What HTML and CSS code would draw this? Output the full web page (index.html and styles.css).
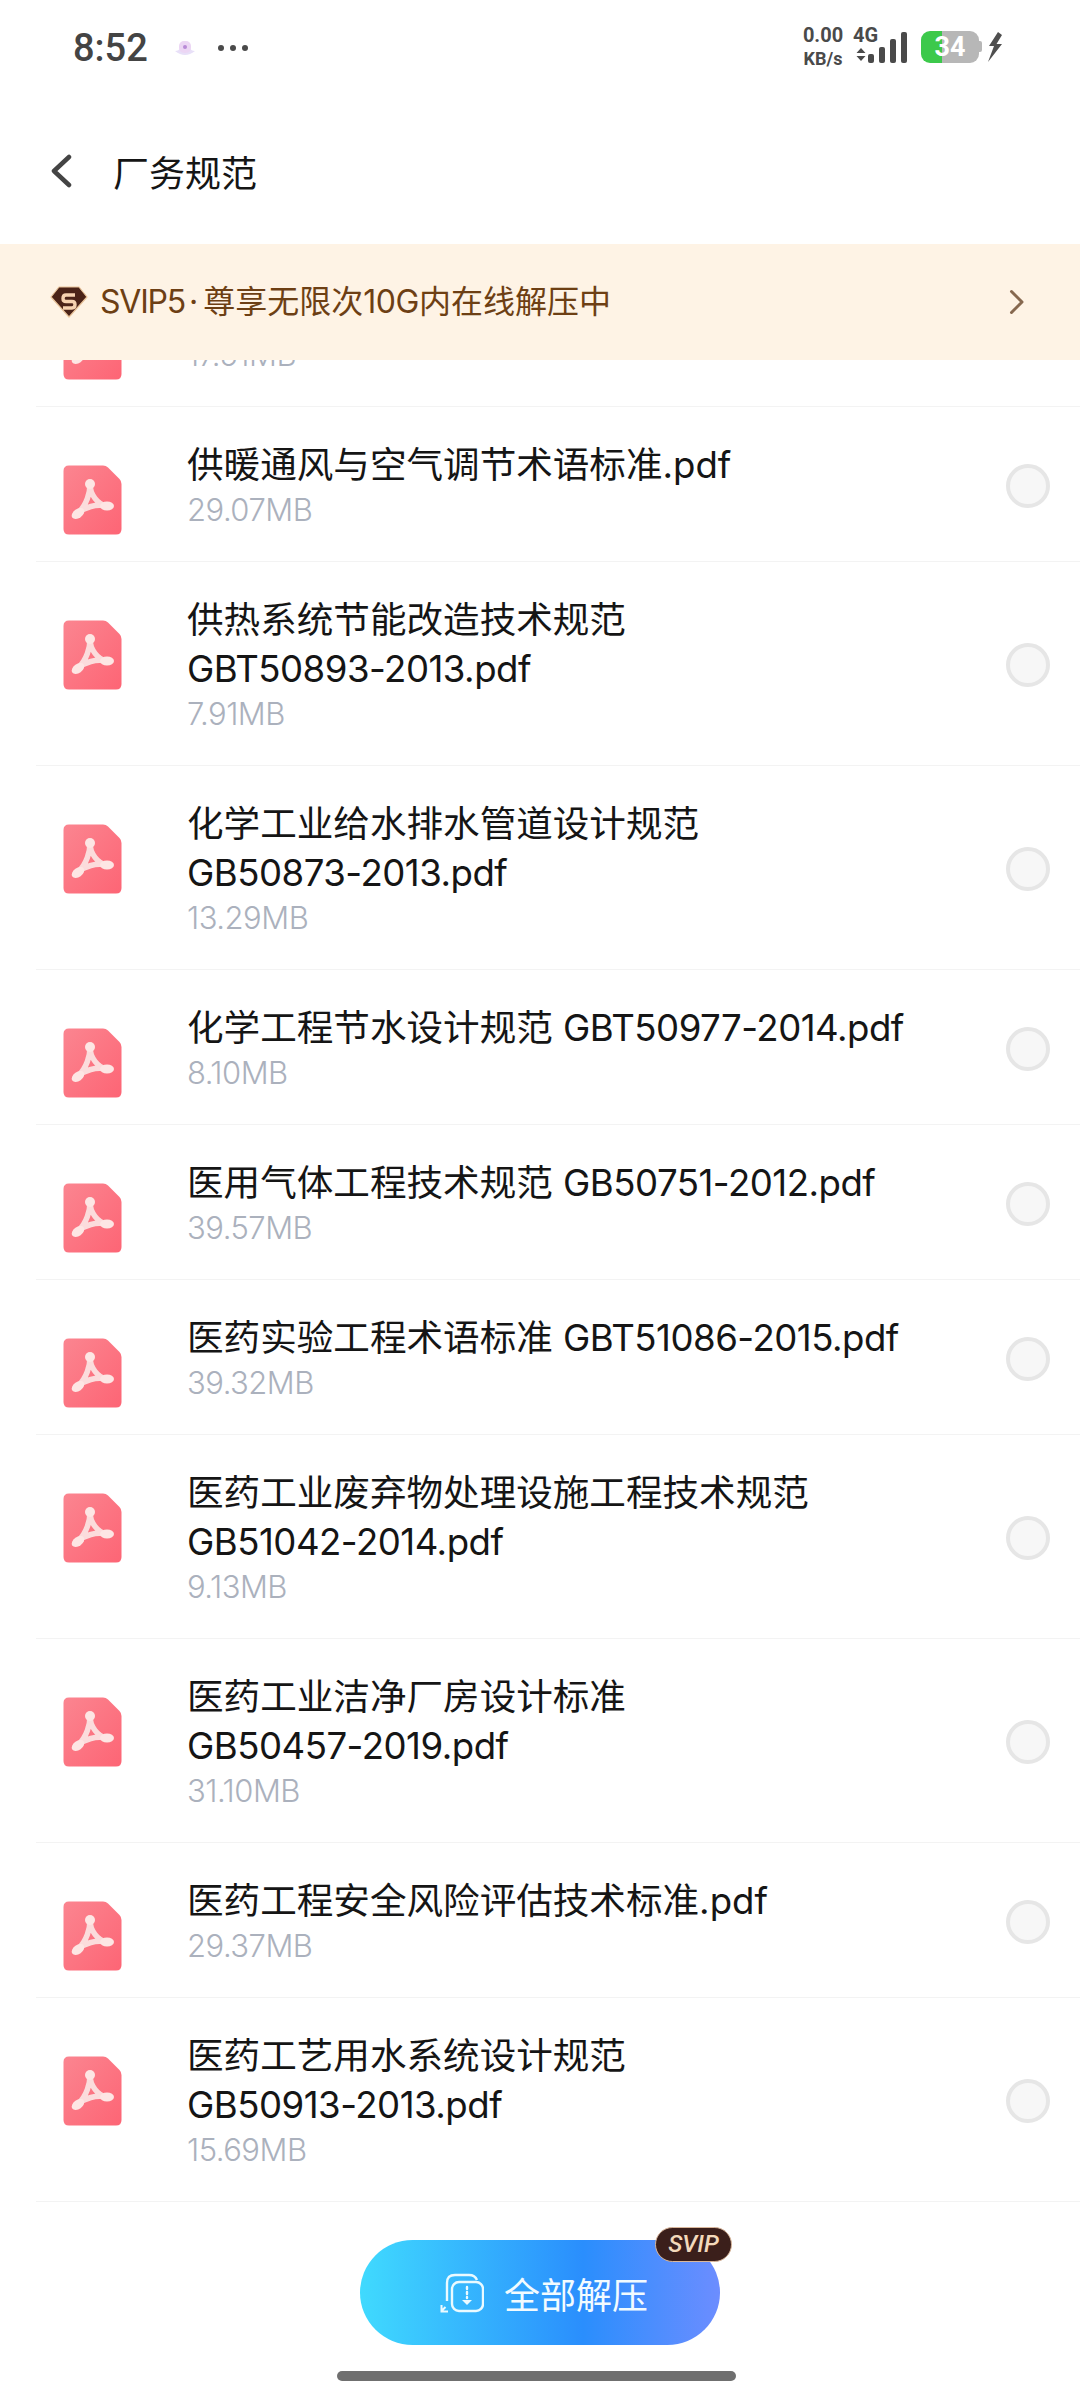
FILE: index.html
```html
<!DOCTYPE html>
<html lang="zh-CN">
<head>
  <meta charset="UTF-8">
  <meta name="viewport" content="width=device-width, initial-scale=1.0">
  <title>厂务规范</title>
  <link rel="stylesheet" href="styles.css">
</head>
<body>
  <svg class="defs" width="0" height="0">
    <defs>
      <linearGradient id="pdf-bg" x1="0" y1="0" x2="1" y2="1">
        <stop offset="0" stop-color="#fb8590"/>
        <stop offset="1" stop-color="#fd6575"/>
      </linearGradient>
      <symbol id="pdf" viewBox="0 0 59 70">
        <path d="M6 0.5H40Q43 0.5 45 2.5L56.5 14Q58.5 16 58.5 19V64Q58.5 69.5 53 69.5H6Q0.5 69.5 0.5 64V6Q0.5 0.5 6 0.5Z" fill="url(#pdf-bg)"/>
        <path d="M27 19C27 27 24 40 15 48M27 19C27 30 35 39 43 41M15 48C22 42 33 39 43 41" fill="none" stroke="#fbdcdc" stroke-width="5.5" stroke-linecap="round"/>
        <circle cx="27" cy="19" r="5" fill="#fde6e4"/>
        <ellipse cx="44" cy="41" rx="7" ry="4.500" fill="#fde6e4"/>
        <ellipse cx="15" cy="48.500" rx="7" ry="4.500" transform="rotate(-35 15 48.500)" fill="#fde6e4"/>
      </symbol>
    </defs>
  </svg>

  <div class="status-bar">
    <div class="status-left">
      <span class="clock">8:52</span>
      <svg class="app-dot" width="22" height="16" viewBox="0 0 22 16">
        <path d="M1 11Q5 11 6 8L16 8Q17 11 21 11Q16 15 11 15Q6 15 1 11Z" fill="#e8e0f8"/>
        <rect x="5" y="1" width="12" height="12" rx="5" fill="#ecd6f4"/>
        <circle cx="11" cy="7" r="2" fill="#b98ad6"/>
      </svg>
      <span class="dots"><i></i><i></i><i></i></span>
    </div>
    <div class="status-right">
      <div class="speed"><span>0.00</span><span>KB/s</span></div>
      <div class="net">
        <span class="net-label">4G</span>
        <svg width="10" height="13" viewBox="0 0 10 13">
          <path d="M5 0L9.500 5H0.500ZM5 13L0.500 8H9.500Z" fill="#4a4a4a"/>
        </svg>
      </div>
      <div class="signal"><i class="b1"></i><i class="b2"></i><i class="b3"></i><i class="b4"></i></div>
      <div class="battery">34</div>
      <svg class="bolt" width="15" height="30" viewBox="0 0 15 30">
        <path d="M10 0L1 14L6 14L0 30L14 12L8.500 12L14 3Z" fill="#4f4f4f"/>
      </svg>
    </div>
  </div>

  <div class="title-bar">
    <svg class="back" width="22" height="34" viewBox="0 0 22 34">
      <path d="M19 3L4 17L19 31" fill="none" stroke="#444" stroke-width="4.500" stroke-linecap="round" stroke-linejoin="round"/>
    </svg>
    <h1>厂务规范</h1>
  </div>

  <div class="banner">
    <svg class="gem" width="38" height="32" viewBox="0 0 38 32">
      <path d="M9 1H29L37 11L19 31L1 11Z" fill="#4b2318" stroke="#e9c39a" stroke-width="1.200" stroke-linejoin="round"/>
      <path d="M25 9H16Q13 9 13 12.500Q13 15.500 16 15.500H22Q25 15.500 25 18.500Q25 22 22 22H13" fill="none" stroke="#f6d2b0" stroke-width="3.400"/>
    </svg>
    <span class="banner-text"><span class="latin">SVIP5</span><span class="mid-dot">·</span>尊享无限次<span class="latin">10G</span>内在线解压中</span>
    <svg class="more" width="16" height="26" viewBox="0 0 16 26">
      <path d="M2.500 2.500L13 13L2.500 23.500" fill="none" stroke="#86684f" stroke-width="3" stroke-linecap="round" stroke-linejoin="round"/>
    </svg>
  </div>

  <ul class="file-list">
    <li class="file">
      <svg class="pdf"><use href="#pdf"/></svg>
      <div class="info"><div class="name">&nbsp;</div><div class="size">17.51MB</div></div>
      <span class="radio"></span>
    </li>
    <li class="file">
      <svg class="pdf"><use href="#pdf"/></svg>
      <div class="info"><div class="name">供暖通风与空气调节术语标准.pdf</div><div class="size">29.07MB</div></div>
      <span class="radio"></span>
    </li>
    <li class="file">
      <svg class="pdf"><use href="#pdf"/></svg>
      <div class="info"><div class="name">供热系统节能改造技术规范<br><span class="latin">GBT50893-2013.pdf</span></div><div class="size">7.91MB</div></div>
      <span class="radio"></span>
    </li>
    <li class="file">
      <svg class="pdf"><use href="#pdf"/></svg>
      <div class="info"><div class="name">化学工业给水排水管道设计规范<br><span class="latin">GB50873-2013.pdf</span></div><div class="size">13.29MB</div></div>
      <span class="radio"></span>
    </li>
    <li class="file">
      <svg class="pdf"><use href="#pdf"/></svg>
      <div class="info"><div class="name">化学工程节水设计规范 <span class="latin">GBT50977-2014.pdf</span></div><div class="size">8.10MB</div></div>
      <span class="radio"></span>
    </li>
    <li class="file">
      <svg class="pdf"><use href="#pdf"/></svg>
      <div class="info"><div class="name">医用气体工程技术规范 <span class="latin">GB50751-2012.pdf</span></div><div class="size">39.57MB</div></div>
      <span class="radio"></span>
    </li>
    <li class="file">
      <svg class="pdf"><use href="#pdf"/></svg>
      <div class="info"><div class="name">医药实验工程术语标准 <span class="latin">GBT51086-2015.pdf</span></div><div class="size">39.32MB</div></div>
      <span class="radio"></span>
    </li>
    <li class="file">
      <svg class="pdf"><use href="#pdf"/></svg>
      <div class="info"><div class="name">医药工业废弃物处理设施工程技术规范<br><span class="latin">GB51042-2014.pdf</span></div><div class="size">9.13MB</div></div>
      <span class="radio"></span>
    </li>
    <li class="file">
      <svg class="pdf"><use href="#pdf"/></svg>
      <div class="info"><div class="name">医药工业洁净厂房设计标准<br><span class="latin">GB50457-2019.pdf</span></div><div class="size">31.10MB</div></div>
      <span class="radio"></span>
    </li>
    <li class="file">
      <svg class="pdf"><use href="#pdf"/></svg>
      <div class="info"><div class="name">医药工程安全风险评估技术标准.pdf</div><div class="size">29.37MB</div></div>
      <span class="radio"></span>
    </li>
    <li class="file">
      <svg class="pdf"><use href="#pdf"/></svg>
      <div class="info"><div class="name">医药工艺用水系统设计规范<br><span class="latin">GB50913-2013.pdf</span></div><div class="size">15.69MB</div></div>
      <span class="radio"></span>
    </li>
  </ul>

  <div class="footer">
    <div class="unzip-btn">
      <svg width="44" height="40" viewBox="0 0 44 40" fill="none" stroke="#eafaff" stroke-width="2.400">
        <path d="M7 28V10Q7 2 15 2H29Q35 2 37 7"/>
        <rect x="12" y="9" width="31" height="29" rx="7"/>
        <path d="M27 14V16M27 19V21M27 24V25" stroke-linecap="round"/>
        <path d="M22 27H32L27 32Z" fill="#eafaff" stroke="none"/>
        <path d="M1.500 32V38.500H8M1.500 38L5.500 34" stroke-width="2"/>
      </svg>
      <span>全部解压</span>
      <em class="svip-tag">SVIP</em>
    </div>
    <div class="home-bar"></div>
  </div>
</body>
</html>
```

FILE: styles.css
```css
* {
  box-sizing: border-box;
}

html,
body {
  margin: 0;
  height: 2400px;
  overflow: hidden;
}

body {
  width: 1080px;
  background: #fff;
  color: #151515;
  font-family: Inter, "Noto Sans CJK SC", "Noto Sans", sans-serif;
}

.defs {
  position: absolute;
}

.latin {
  letter-spacing: -0.5px;
}

/* status bar */
.status-bar {
  height: 96px;
  padding: 0 77px 0 73px;
  display: flex;
  justify-content: space-between;
  align-items: center;
}

.status-left {
  display: flex;
  align-items: center;
}

.clock {
  font-family: Roboto, sans-serif;
  font-size: 38px;
  font-weight: 500;
  color: #444;
}

.app-dot {
  margin-left: 26px;
}

.dots {
  margin-left: 22px;
  display: flex;
  gap: 6px;
}

.dots i {
  width: 6px;
  height: 6px;
  border-radius: 50%;
  background: #4a4a4a;
}

.status-right {
  display: flex;
  align-items: flex-end;
  height: 40px;
  margin-top: -10px;
  color: #4a4a4a;
  font-family: Roboto, sans-serif;
  font-weight: 700;
}

.speed {
  display: flex;
  flex-direction: column;
  align-items: center;
  font-size: 20px;
  line-height: 23px;
  width: 44px;
  height: 38px;
  margin-bottom: 1px;
}

.speed span:last-child {
  font-size: 18px;
}

.net {
  margin-left: 8px;
  width: 26px;
  height: 38px;
  margin-bottom: 1px;
  display: flex;
  flex-direction: column;
}

.net-label {
  font-size: 20px;
  line-height: 23px;
}

.net svg {
  margin: 1px 0 0 3px;
}

.signal {
  margin-left: -11px;
  display: flex;
  align-items: flex-end;
  gap: 5px;
  height: 32px;
}

.signal i {
  width: 6px;
  background: #4a4a4a;
  border-radius: 2px;
}

.signal .b1 { height: 9px; }
.signal .b2 { height: 16px; }
.signal .b3 { height: 24px; }
.signal .b4 { height: 31px; }

.battery {
  position: relative;
  margin-left: 14px;
  width: 58px;
  height: 32px;
  border-radius: 9px;
  background: linear-gradient(90deg, #3cc94b 0 21px, #b7b7b7 21px);
  color: #fff;
  font-size: 27px;
  line-height: 32px;
  text-align: center;
}

.battery::after {
  content: "";
  position: absolute;
  right: -3px;
  top: 10px;
  width: 3px;
  height: 11px;
  border-radius: 0 2px 2px 0;
  background: #b7b7b7;
}

.bolt {
  margin-left: 9px;
  margin-bottom: 1px;
}

/* title */
.title-bar {
  height: 148px;
  padding: 2px 0 0 50px;
  display: flex;
  align-items: center;
}

.title-bar h1 {
  margin: 0 0 0 41px;
  font-size: 36px;
  font-weight: 400;
}

/* vip banner */
.banner {
  position: relative;
  z-index: 1;
  height: 116px;
  padding: 0 55px 0 50px;
  display: flex;
  align-items: center;
  background: #fef3e5;
}

.banner-text {
  margin-left: 12px;
  flex: 1;
  font-size: 32px;
  line-height: 40px;
  color: #6d3f14;
}

.banner-text .latin:first-child {
  letter-spacing: -1.2px;
}

.mid-dot {
  margin: 0 5px 0 4px;
}

/* files */
.file-list {
  list-style: none;
  margin: -108px 0 0;
  padding: 0 0 0 36px;
}

.file {
  padding: 34px 30px 31px 27px;
  display: flex;
  align-items: center;
  border-bottom: 1px solid #f3f3f3;
}

.pdf {
  width: 59px;
  height: 70px;
  flex: none;
  align-self: flex-start;
  margin: 24px 0 -10px;
}

.info {
  margin-left: 65px;
  flex: 1;
}

.name {
  font-size: 36.6px;
  line-height: 49px;
}

.size {
  margin-top: -1px;
  font-size: 31px;
  font-weight: 300;
  line-height: 41px;
  letter-spacing: -0.5px;
  color: #abb1bd;
}

.radio {
  width: 44px;
  height: 44px;
  flex: none;
  border-radius: 50%;
  border: 4px solid #e6e6e6;
  background: #f7f7f7;
}

/* bottom */
.footer {
  padding-top: 38px;
  display: flex;
  flex-direction: column;
  align-items: center;
}

.unzip-btn {
  position: relative;
  width: 360px;
  height: 105px;
  border-radius: 53px;
  display: flex;
  align-items: center;
  justify-content: center;
  gap: 20px;
  padding-left: 8px;
  background: linear-gradient(90deg, #40dafe 0%, #2a8efd 62%, #6c8dff 100%);
  color: #f2fbff;
  font-size: 36px;
}

.svip-tag {
  position: absolute;
  right: -12px;
  top: -13px;
  width: 77px;
  height: 35px;
  border-radius: 18px;
  border: 1px solid #d9b79c;
  background: #3b1f1b;
  color: #f3d9bb;
  font-family: Roboto, sans-serif;
  font-size: 24px;
  font-weight: 500;
  line-height: 32px;
  text-align: center;
}

.home-bar {
  margin: 26px 7px 0 0;
  width: 399px;
  height: 10px;
  border-radius: 5px;
  background: #6f6f6f;
}
```
